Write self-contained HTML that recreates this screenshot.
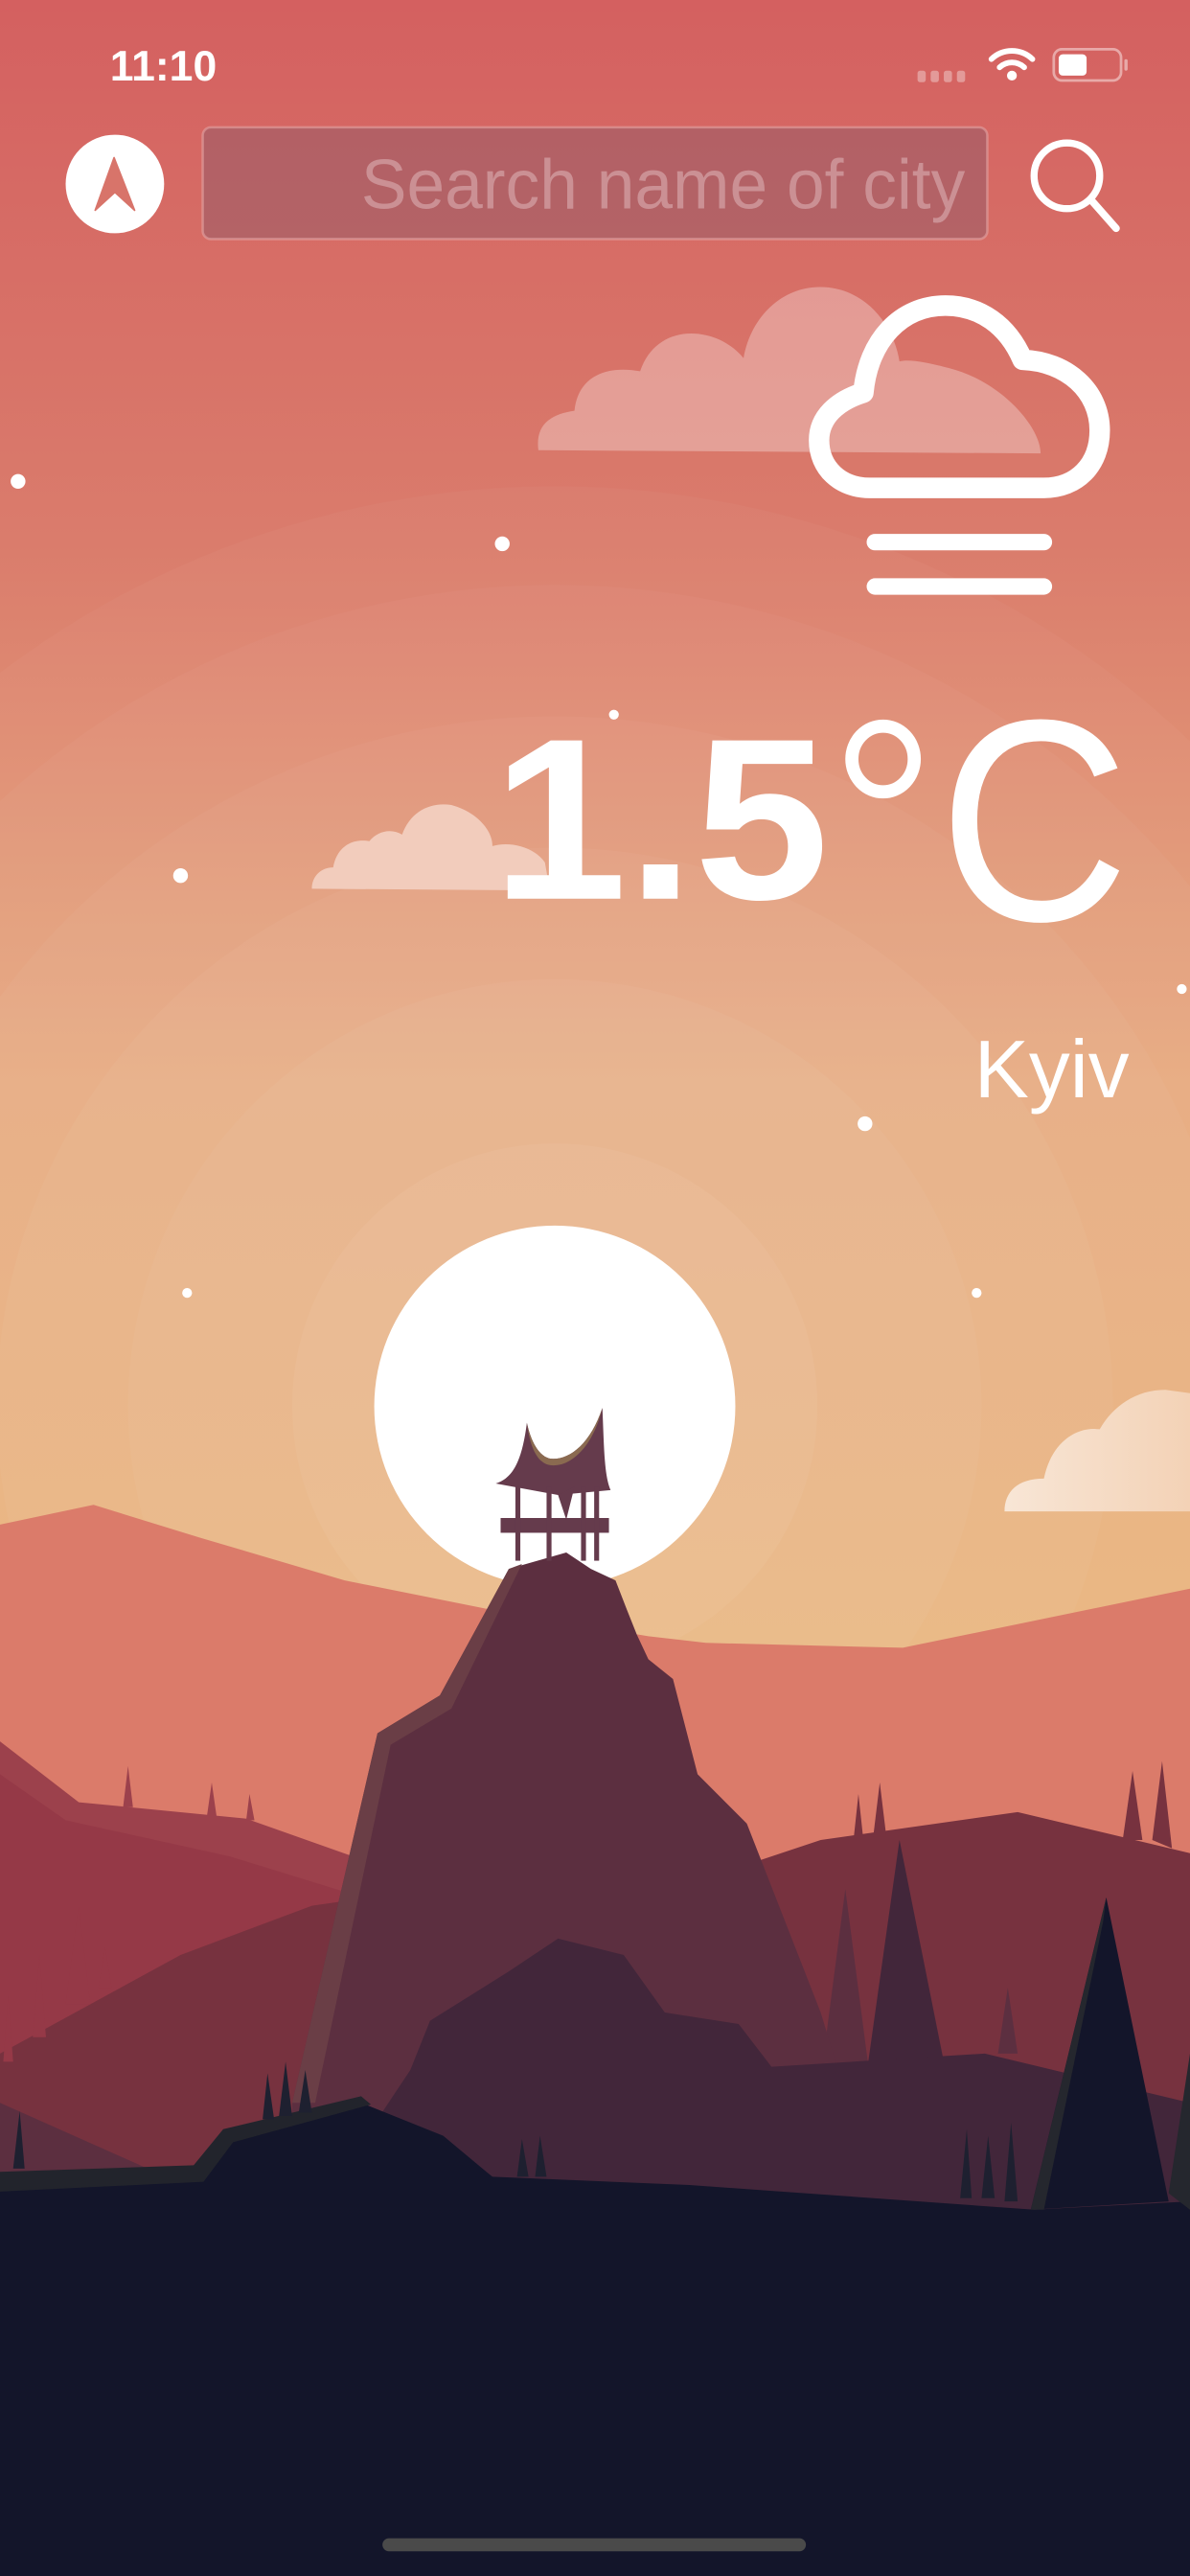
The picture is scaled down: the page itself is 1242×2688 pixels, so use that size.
<!DOCTYPE html>
<html><head><meta charset="utf-8"><style>
html,body{margin:0;padding:0;width:1242px;height:2688px;overflow:hidden;background:#131529}
svg{display:block}
</style></head><body>
<svg width="1242" height="2688" viewBox="0 0 725 1568" preserveAspectRatio="none" xmlns="http://www.w3.org/2000/svg">
<defs>
<linearGradient id="sky" x1="0" y1="0" x2="0" y2="1">
<stop offset="0" stop-color="#d46060"/>
<stop offset="0.3" stop-color="#da7c6c"/>
<stop offset="0.6" stop-color="#e8aa7e"/>
<stop offset="1" stop-color="#ebb475"/>
</linearGradient>
<linearGradient id="c3" x1="0" y1="0" x2="1" y2="0">
<stop offset="0" stop-color="#f8e6d6"/><stop offset="1" stop-color="#f3d2b6"/>
</linearGradient>
</defs>
<rect width="725" height="1100" fill="url(#sky)"/>
<g fill="#ffffff">
<circle cx="338" cy="856" r="560" opacity="0.03"/>
<circle cx="338" cy="856" r="500" opacity="0.03"/>
<circle cx="338" cy="856" r="420" opacity="0.035"/>
<circle cx="338" cy="856" r="340" opacity="0.04"/>
<circle cx="338" cy="856" r="260" opacity="0.04"/>
<circle cx="338" cy="856" r="160" opacity="0.05"/>
</g>
<!-- clouds -->
<path d="M328 274 C326 258 336 252 350 250 C352 230 368 222 390 226 C396 208 412 200 430 204 C440 206 448 212 453 218 C458 190 480 172 505 175 C530 178 545 200 548 220 C555 218 570 222 578 224 C610 232 634 260 634 276 Z" fill="#ffffff" opacity="0.3"/>
<path d="M190 541 C190 533 196 528 203 528 C205 516 214 510 225 512 C230 506 238 504 245 508 C250 494 262 488 275 490 C290 494 300 505 300 515 C310 512 325 515 332 525 L335 542 Z" fill="#f2ccbc"/>
<path d="M612 920 C612 908 620 900 636 900 C640 880 654 868 670 870 C678 856 692 846 710 846 L725 848 L725 920 Z" fill="url(#c3)"/>
<!-- stars -->
<g fill="#fff"><circle cx="11" cy="293" r="4.5"/><circle cx="306" cy="331" r="4.5"/><circle cx="374" cy="435" r="3"/><circle cx="110" cy="533" r="4.5"/><circle cx="720" cy="602" r="3"/><circle cx="527" cy="684" r="4.5"/><circle cx="114" cy="787" r="3"/><circle cx="595" cy="787" r="3"/></g>
<!-- sun -->
<circle cx="338" cy="856" r="110" fill="#ffffff"/>
<!-- back mountains -->
<path d="M0 928 L57 916 L122 936 L210 962 L300 980 L395 996 L430 1000 L550 1003 L725 967 L725 1400 L0 1400 Z" fill="#db7b6a"/>
<path d="M0 1060 L48 1097 L150 1107 L215 1130 L270 1160 L300 1400 L0 1400 Z" fill="#9c414c"/>
<path d="M0 1080 L40 1108 L140 1130 L270 1170 L300 1400 L0 1400 Z" fill="#953947"/>
<g fill="#9c414c"><path d="M75 1100 L78 1075 L81 1100Z"/><path d="M126 1106 L129 1085 L132 1106Z"/><path d="M150 1108 L152 1092 L155 1108Z"/></g>
<path d="M380 1175 L440 1140 L500 1120 L620 1103 L725 1128 L725 1400 L380 1400 Z" fill="#77323f"/>
<g fill="#77323f"><path d="M684 1120 L690 1078 L696 1120Z"/><path d="M702 1120 L708 1072 L714 1125Z"/><path d="M520 1120 L523 1092 L526 1120Z"/><path d="M532 1118 L536 1085 L540 1118Z"/></g>
<path d="M0 1250 L110 1190 L190 1160 L260 1150 L300 1400 L0 1400 Z" fill="#77323f"/>
<g fill="#953947"><path d="M40 1220 L48 1160 L55 1220Z"/><path d="M20 1240 L24 1190 L28 1240Z"/><path d="M60 1210 L64 1185 L68 1210Z"/><path d="M2 1255 L5 1215 L8 1255Z"/></g>
<path d="M0 1280 L90 1320 L160 1320 L200 1300 L200 1400 L0 1400 Z" fill="#5c2f40"/>
<!-- trees right -->
<path d="M500 1265 L515 1150 L530 1265 Z" fill="#5c2f40"/>
<path d="M528 1262 L548 1120 L575 1255 Z" fill="#42263a"/>
<path d="M608 1250 L614 1210 L620 1250 Z" fill="#5c2f40"/>
<!-- big peak -->
<path d="M178 1280 L230 1055 L268 1032 L310 955 L345 945 L360 955 L375 962 L382 980 L388 995 L395 1010 L410 1022 L425 1080 L455 1110 L500 1225 L520 1290 L178 1300 Z" fill="#5c2f40"/>
<path d="M178 1280 L230 1055 L268 1032 L310 955 L318 952 L275 1040 L238 1062 L192 1280 Z" fill="#6a3e46"/>
<!-- pavilion -->
<path d="M321 866 C324 880 330 888 337 888 C348 888 360 878 367 857 C368 880 368 898 372 907 L340 910 L302 903 C312 900 318 890 321 866 Z" fill="#653b4c"/>
<path d="M321 866 C324 880 330 888 337 888 C348 888 360 878 367 857 C362 878 350 892 337 892 C328 892 323 882 321 866Z" fill="#8a6a50"/>
<rect x="305" y="924" width="66" height="9" fill="#653b4c"/>
<g fill="#653b4c"><rect x="314" y="905" width="3" height="45"/><rect x="333" y="905" width="3" height="45"/><rect x="354" y="905" width="3" height="45"/><rect x="362" y="905" width="3" height="45"/><path d="M340 910 L350 905 L345 925 Z"/></g>
<!-- lower mound -->
<path d="M200 1335 L250 1260 L262 1230 L310 1200 L340 1180 L380 1190 L405 1225 L450 1232 L470 1258 L600 1250 L725 1280 L725 1400 L200 1400 Z" fill="#42263a"/>
<!-- foreground -->
<path d="M0 1330 L120 1325 L140 1302 L220 1280 L270 1300 L300 1325 L420 1330 L630 1345 L725 1340 L725 1568 L0 1568 Z" fill="#13152a"/>
<path d="M0 1322 L118 1318 L136 1296 L220 1276 L226 1281 L142 1304 L124 1328 L0 1334 Z" fill="#22242c"/>
<path d="M628 1345 L674 1155 L712 1340 Z" fill="#13152a"/>
<path d="M628 1345 L674 1155 L672 1170 L636 1345Z" fill="#25272e"/>
<path d="M712 1335 L725 1250 L725 1345 Z" fill="#25272e"/>
<g fill="#1e2030"><path d="M160 1290 L163 1262 L167 1290Z"/><path d="M170 1288 L174 1255 L178 1288Z"/><path d="M182 1286 L186 1260 L190 1286Z"/><path d="M315 1325 L318 1302 L322 1325Z"/><path d="M326 1325 L329 1300 L333 1325Z"/><path d="M585 1338 L589 1296 L592 1338Z"/><path d="M598 1338 L602 1300 L606 1338Z"/><path d="M612 1340 L616 1292 L620 1340Z"/><path d="M8 1320 L12 1285 L15 1320Z"/></g>
<!-- status bar -->
<text x="67" y="49" font-family="Liberation Sans, sans-serif" font-weight="bold" font-size="26" fill="#fff">11:10</text>
<g fill="#fff" opacity="0.35"><rect x="559" y="43" width="5" height="7" rx="1.5"/><rect x="567" y="43" width="5" height="7" rx="1.5"/><rect x="575" y="43" width="5" height="7" rx="1.5"/><rect x="583" y="43" width="5" height="7" rx="1.5"/></g>
<g fill="none" stroke="#fff" stroke-width="3.4" stroke-linecap="round"><path d="M604 36 A18 18 0 0 1 629 36"/><path d="M609 41 A11 11 0 0 1 624 41"/></g>
<circle cx="616.5" cy="46" r="3" fill="#fff"/>
<rect x="642" y="30" width="41" height="19" rx="5" fill="none" stroke="#fff" stroke-opacity="0.45" stroke-width="1.6"/>
<rect x="645" y="33" width="17" height="13" rx="2.5" fill="#fff"/>
<rect x="685" y="36" width="2" height="7" rx="1" fill="#fff" opacity="0.45"/>
<!-- nav -->
<circle cx="70" cy="112" r="30" fill="#fff"/>
<path d="M69.5 96 L58 128 L70 117 L82 128 Z" fill="#d8746a" stroke="#d8746a" stroke-width="1" stroke-linejoin="round"/>
<!-- search box -->
<rect x="123.5" y="77.5" width="478" height="68" rx="5" fill="#8a5868" fill-opacity="0.45" stroke="#e6aaaa" stroke-opacity="0.55" stroke-width="1.5"/>
<text x="220" y="127" textLength="368" lengthAdjust="spacingAndGlyphs" font-family="Liberation Sans, sans-serif" font-size="43" fill="#cb9094">Search name of city</text>
<circle cx="650" cy="107" r="20" fill="none" stroke="#fff" stroke-width="4.3"/>
<line x1="665" y1="122" x2="680" y2="139" stroke="#fff" stroke-width="4.5" stroke-linecap="round"/>
<!-- weather icon -->
<path d="M530 297 L636 297 C656 297 670 283 670 262 C670 238 650 220 623 219 C614 198 597 186 576 186 C549 186 529 207 526 239 C510 244 499 254 499 268 C499 285 512 297 530 297 Z" fill="none" stroke="#fff" stroke-width="12.5" stroke-linejoin="round"/>
<line x1="533" y1="330" x2="636" y2="330" stroke="#fff" stroke-width="10" stroke-linecap="round"/>
<line x1="533" y1="357" x2="636" y2="357" stroke="#fff" stroke-width="10" stroke-linecap="round"/>
<!-- temperature -->
<text x="300" y="547" textLength="205" lengthAdjust="spacingAndGlyphs" font-family="Liberation Sans, sans-serif" font-weight="bold" font-size="140" fill="#fff">1.5</text>
<ellipse cx="538" cy="462" rx="19" ry="20" fill="none" stroke="#fff" stroke-width="8"/>
<text x="572" y="560" textLength="116" lengthAdjust="spacingAndGlyphs" font-family="Liberation Sans, sans-serif" font-size="175" fill="#fff">C</text>
<text x="688" y="668" text-anchor="end" font-family="Liberation Sans, sans-serif" font-size="50" fill="#fff">Kyiv</text>
<!-- home indicator -->
<rect x="233" y="1545" width="258" height="8" rx="4" fill="#4a4a4a"/>
</svg>
</body></html>
